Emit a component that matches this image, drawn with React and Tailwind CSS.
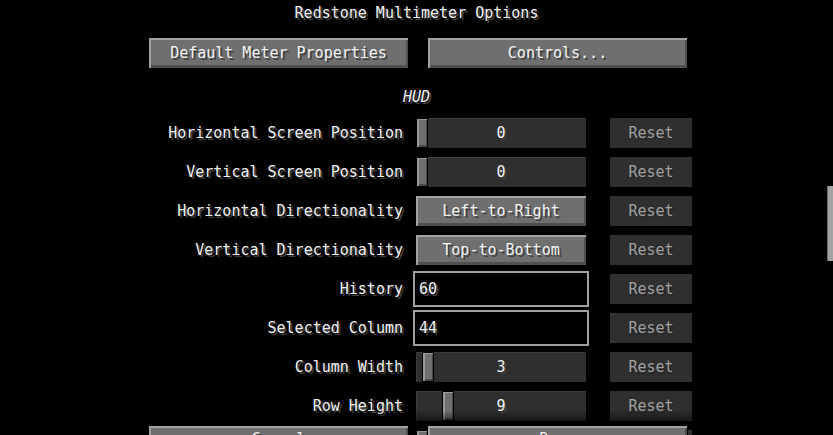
const font = "font-['DejaVu_Sans_Mono','Liberation_Mono',monospace] text-[15px] leading-none"
const shadowWhite = "text-[#f2f2f2] [text-shadow:2px_2px_0_#3f3f3f]"
const shadowGray = "text-[#a0a0a0] [text-shadow:2px_2px_0_#282828]"

const rows = [
  { label: 'Horizontal Screen Position', type: 'slider', value: '0', handle: 0 },
  { label: 'Vertical Screen Position', type: 'slider', value: '0', handle: 0 },
  { label: 'Horizontal Directionality', type: 'button', value: 'Left-to-Right' },
  { label: 'Vertical Directionality', type: 'button', value: 'Top-to-Bottom' },
  { label: 'History', type: 'field', value: '60' },
  { label: 'Selected Column', type: 'field', value: '44' },
  { label: 'Column Width', type: 'slider', value: '3', handle: 6 },
  { label: 'Row Height', type: 'slider', value: '9', handle: 26 },
  { label: '', type: 'slider', value: '', handle: 0 },
]

function Button({ children, className = '' }) {
  return (
    <div className={`flex items-center justify-center border border-black bg-[#6f6f6f] shadow-[inset_2px_2px_0_#a2a2a2,inset_-2px_-3px_0_#4f4f4f] ${shadowWhite} ${className}`}>
      {children}
    </div>
  )
}

function Slider({ value, handle }) {
  return (
    <div className={`relative flex h-[32px] w-[172px] items-center justify-center border border-black bg-[#2f2f2f] shadow-[inset_1px_1px_0_#3c3c3c] ${shadowWhite}`}>
      <div
        className="absolute top-0 bottom-0 w-[12px] border border-black bg-[#707070] shadow-[inset_2px_1px_0_#9a9a9a,inset_-1px_-2px_0_#484848]"
        style={{ left: handle }}
      ></div>
      <span className="relative">{value}</span>
    </div>
  )
}

function Field({ value }) {
  return (
    <div className={`-mx-[2px] flex h-[36px] w-[176px] items-center border-2 border-[#a0a0a0] bg-black pl-[4px] ${shadowWhite}`}>
      {value}
    </div>
  )
}

export default function App() {
  return (
    <div className={`relative h-[435px] w-[833px] overflow-hidden bg-black ${font}`}>
      <div className={`flex h-[26px] items-center justify-center ${shadowWhite}`}>Redstone Multimeter Options</div>

      <div className="mt-[11px] flex gap-[18px] pl-[148px]">
        <Button className="h-[32px] w-[261px]">Default Meter Properties</Button>
        <Button className="h-[32px] w-[261px]">Controls...</Button>
      </div>

      <div className={`mt-[18px] flex h-[20px] items-center justify-center italic ${shadowWhite}`}>HUD</div>

      <div className="mt-[10px] flex flex-col gap-[7px] pl-[148px]">
        {rows.map((row, i) => (
          <div key={i} className="flex h-[32px] items-center">
            <div className={`w-[255px] text-right ${shadowWhite}`}>{row.label}</div>
            <div className="ml-[12px] flex w-[172px] justify-center">
              {row.type === 'slider' && <Slider value={row.value} handle={row.handle} />}
              {row.type === 'button' && <Button className="h-[32px] w-[172px]">{row.value}</Button>}
              {row.type === 'field' && <Field value={row.value} />}
            </div>
            <div className={`ml-[22px] flex h-[32px] w-[84px] items-center justify-center border border-black bg-[#2f2f2f] ${shadowGray}`}>
              Reset
            </div>
          </div>
        ))}
      </div>

      <div className="absolute left-0 right-0 top-[410px] h-[15px] bg-gradient-to-b from-transparent to-black/70"></div>
      <div className="absolute left-0 right-0 top-[425px] flex gap-[18px] pl-[148px]">
        <Button className="h-[32px] w-[261px] pb-[4px]">Cancel</Button>
        <Button className="h-[32px] w-[261px] pb-[4px]">Done</Button>
      </div>

      <div className="absolute right-0 top-[186px] h-[75px] w-[6px] border-l border-[#6a6a6a] bg-[#a3a3a3]"></div>
    </div>
  )
}
